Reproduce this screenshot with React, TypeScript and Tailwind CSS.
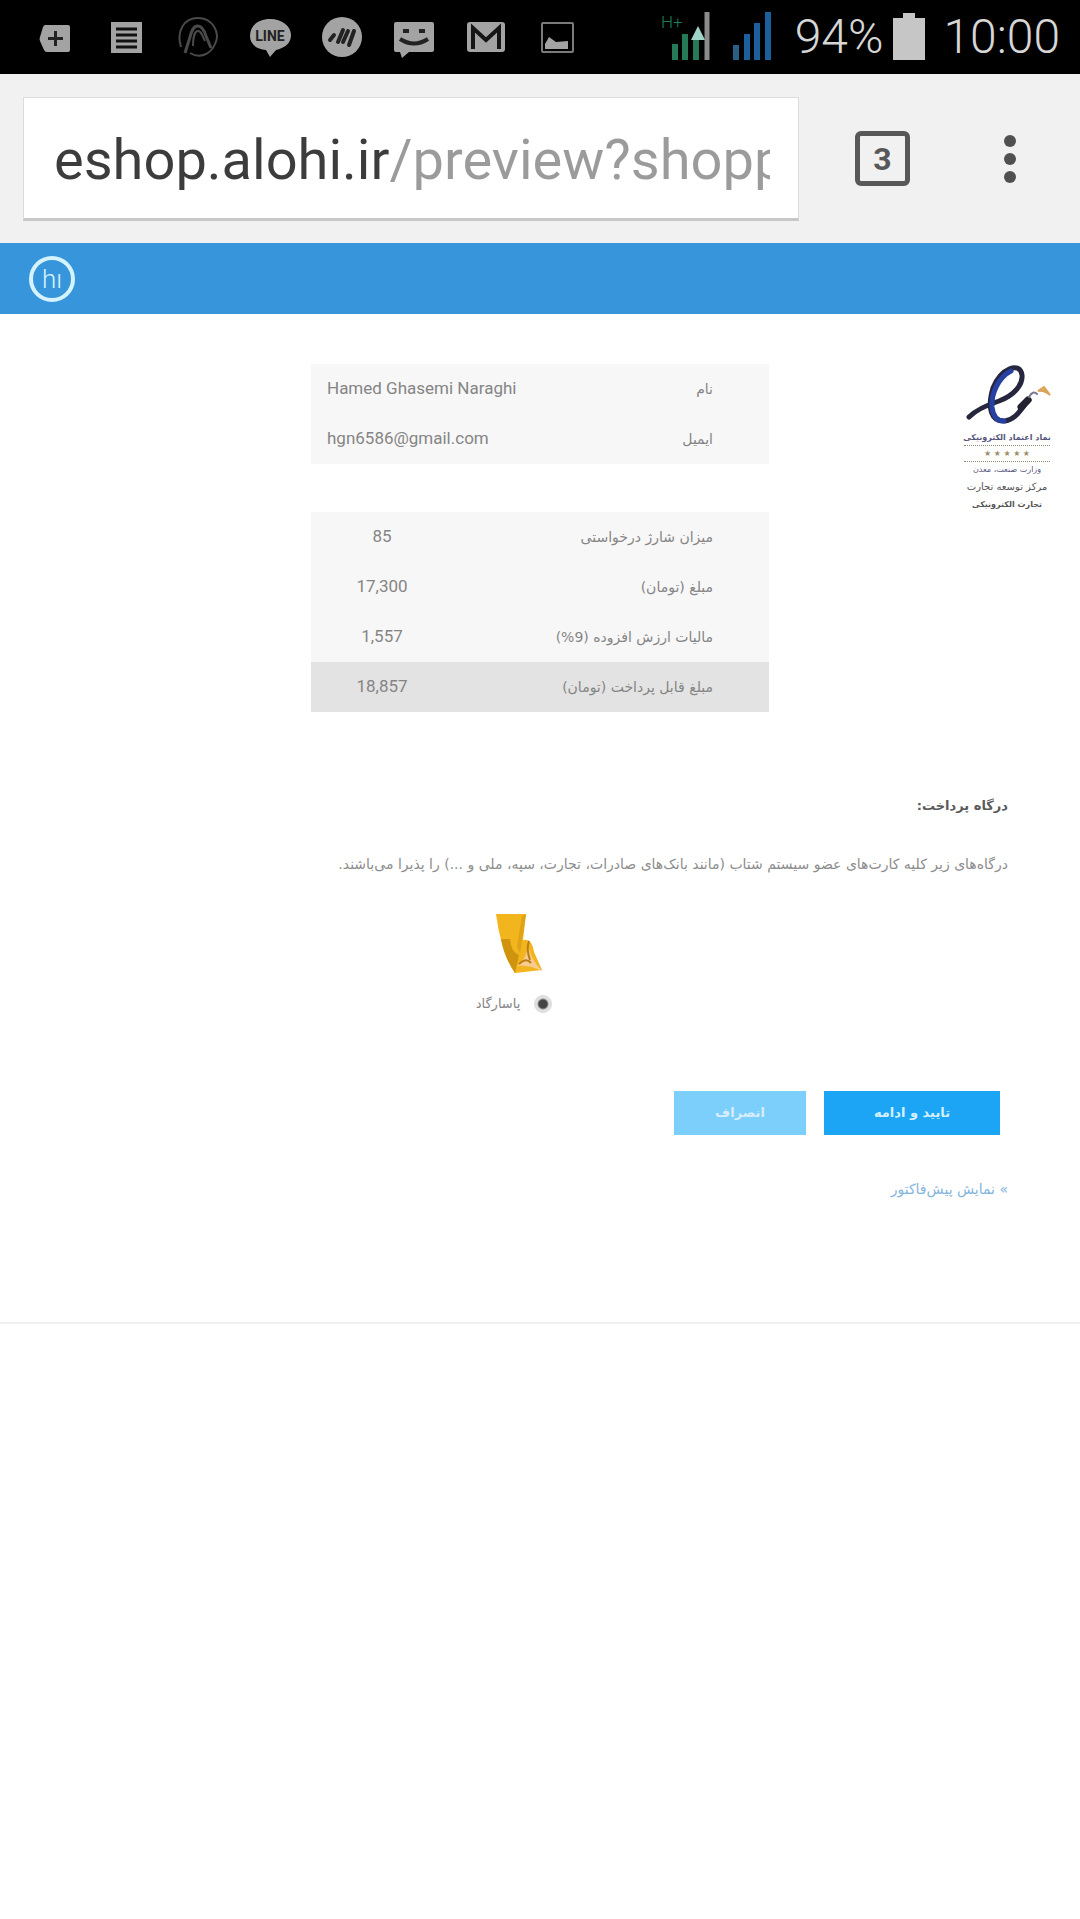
import type { ReactNode } from "react";

type Row = {
  label: string;
  value: string;
  isTotal?: boolean;
};

const account: Row[] = [
  { label: "نام", value: "Hamed Ghasemi Naraghi" },
  { label: "ایمیل", value: "hgn6586@gmail.com" },
];

const invoice: Row[] = [
  { label: "میزان شارژ درخواستی", value: "85" },
  { label: "مبلغ (تومان)", value: "17,300" },
  { label: "مالیات ارزش افزوده (9%)", value: "1,557" },
  { label: "مبلغ قابل پرداخت (تومان)", value: "18,857", isTotal: true },
];

function StatusIcon({ children }: { children: ReactNode }) {
  return (
    <svg viewBox="0 0 44 44" className="size-11 shrink-0" fill="#a3a3a3" aria-hidden="true">
      {children}
    </svg>
  );
}

function StatusBar() {
  return (
    <header className="flex h-[74px] items-center justify-between bg-black pr-5 pl-8">
      <div className="flex items-center gap-7">
        <StatusIcon>
          <path d="M13 10h23q2 0 2 2v23q0 2-2 2H15q-2 0-3-2l-4-9q-1-2 0-4l3-10q1-2 2-2z" />
          <path d="M22 16h3v6h6v3h-6v6h-3v-6h-6v-3h6z" fill="#222" />
        </StatusIcon>
        <StatusIcon>
          <path d="M7 7h31v31H7z" />
          <path d="M12 14h21M12 20h21M12 26h21M12 32h21" stroke="#111" strokeWidth="3" />
        </StatusIcon>
        <StatusIcon>
          <g fill="none" stroke="#4a4a4a" strokeWidth="2">
            <path d="M5 32C0 16 8 3 22 3s23 14 17 26c-4 10-15 15-25 9" />
            <path d="M9 38l5-16c2-8 4-11 8-11s6 4 8 10l5 12" strokeWidth="3" />
            <path d="M17 31c0-9 2-15 5-15s4 4 7 10" />
          </g>
        </StatusIcon>
        <StatusIcon>
          <path d="M22 4c12 0 21 7 21 16s-7 13-15 15l-6 7-4-7C8 34 2 29 2 21 2 11 10 4 22 4z" />
          <text x="22" y="26" textAnchor="middle" fontFamily="Roboto, sans-serif" fontSize="14" fontWeight="700" fill="#222">
            LINE
          </text>
        </StatusIcon>
        <StatusIcon>
          <circle cx="22" cy="22" r="20" />
          <path d="M10 25l4-5M18 27l5-12M23 27l5-11M29 30l5-14" stroke="#222" strokeWidth="4" strokeLinecap="round" />
        </StatusIcon>
        <StatusIcon>
          <path d="M4 7h36q2 0 2 2v26q0 2-2 2H17l-7 6-2-6H4q-2 0-2-2V9q0-2 2-2z" />
          <path d="M11 16h6M27 16h6" stroke="#222" strokeWidth="4" />
          <path d="M8 24q14 9 28 0" fill="none" stroke="#222" strokeWidth="4" />
        </StatusIcon>
        <StatusIcon>
          <rect x="3" y="7" width="38" height="30" rx="3" />
          <path d="M9 34V13l13 12 13-12v21" fill="none" stroke="#151515" strokeWidth="4" />
        </StatusIcon>
        <StatusIcon>
          <rect x="6" y="8" width="31" height="29" rx="1" fill="#000" stroke="#7a7a7a" strokeWidth="2" />
          <path d="M9 34v-5l4-7 7 5 12-1v8z" />
        </StatusIcon>
      </div>
      <div className="flex items-center font-[Roboto,sans-serif] text-[48px] leading-[54px] font-light text-[#d6d6d6]">
        <svg viewBox="0 0 114 54" className="mr-5 h-[54px] w-[114px]" aria-hidden="true">
          <text x="0" y="18" fontFamily="Roboto, sans-serif" fontSize="17" fill="#1d7f5c">
            H+
          </text>
          <path d="M14 50V34M24 50V24M35 50V30" stroke="#257a57" strokeWidth="6" />
          <path d="M46 50V2" stroke="#8b8b8b" strokeWidth="5" />
          <path d="M37 16l7 14H30z" fill="#9fd4c9" />
          <path d="M75 50V35" stroke="#2b5e85" strokeWidth="6" />
          <path d="M86 50V24M96 50V13M107 50V2" stroke="#1b5f9c" strokeWidth="6" />
        </svg>
        <span>94%</span>
        <svg viewBox="0 0 32 48" className="mx-[10px] h-12 w-8" fill="#c6c6c6" aria-hidden="true">
          <path d="M10 0h12v5h10v42H0V5h10z" />
        </svg>
        <span className="ml-2">10:00</span>
      </div>
    </header>
  );
}

function BrowserBar() {
  return (
    <div className="flex h-[169px] items-center bg-[#f1f1f1] pl-[23px] font-[Roboto,sans-serif]">
      <div className="h-[124px] flex-1 border border-b-3 border-[#dcdcdc] border-b-[#c8c8c8] bg-white pr-7 pl-[30px]">
        <input
          type="text"
          aria-label="Address"
          defaultValue="eshop.alohi.ir/preview?shoppingcart"
          className="h-full w-full bg-[linear-gradient(90deg,#3c3c3c_335px,#9b9b9b_335px)] bg-clip-text pt-1 text-[56px] text-transparent outline-none"
        />
      </div>
      <button
        type="button"
        aria-label="Open tabs"
        className="ml-14 flex size-[55px] items-center justify-center rounded-md border-5 border-[#585858] text-[32px] font-bold text-[#585858]"
      >
        3
      </button>
      <button type="button" aria-label="Menu" className="mr-12 ml-[78px] flex w-11 flex-col items-center gap-[6px]">
        <span className="size-3 rounded-full bg-[#505050]" />
        <span className="size-3 rounded-full bg-[#505050]" />
        <span className="size-3 rounded-full bg-[#505050]" />
      </button>
    </div>
  );
}

function DetailTable({ rows, centered }: { rows: Row[]; centered?: boolean }) {
  return (
    <table className="w-full bg-[#f7f7f7] text-[#858585]">
      <tbody>
        {rows.map((row) => (
          <tr key={row.label} className={row.isTotal ? "h-[50px] bg-[#e3e3e3]" : "h-[50px]"}>
            <th scope="row" className="pr-14 text-right text-sm font-normal">
              {row.label}
            </th>
            <td
              dir="ltr"
              className={
                centered
                  ? "w-[142px] text-center font-[Roboto,sans-serif] text-[17px]"
                  : "pl-4 text-left font-[Roboto,sans-serif] text-[17px]"
              }
            >
              {row.value}
            </td>
          </tr>
        ))}
      </tbody>
    </table>
  );
}

function TrustSeal() {
  return (
    <div className="flex w-[86px] flex-col items-center text-center text-[8px] leading-[15px] text-[#55557c]">
      <svg viewBox="0 0 88 66" className="h-[66px] w-[88px]" fill="none" strokeLinecap="round" aria-hidden="true">
        <path d="M6 53C14 45 24 41 36 37c16-6 24-17 23-26C57-3 38 4 30 24c-6 20-2 34 12 33 12-2 16-13 24-21" stroke="#26273f" strokeWidth="5" />
        <path d="M48 7C36 13 28 29 29 43c1 9 5 14 12 14" stroke="#2740a4" strokeWidth="5" />
        <path d="M58 43l7-7" stroke="#23232e" strokeWidth="7" />
        <path d="M66 33q4-7 8-3" stroke="#777790" strokeWidth="2" />
        <path d="M75 27l6-4 6 8q-6-5-12-4z" fill="#e5ae55" stroke="#d9a45a" strokeWidth="2" />
      </svg>
      <strong className="whitespace-nowrap">نماد اعتماد الکترونیکی</strong>
      <span className="w-full border-y border-dotted border-[#8d8d78] text-[#9a8f68]">★ ★ ★ ★ ★</span>
      <span className="whitespace-nowrap">وزارت صنعت، معدن</span>
      <span className="text-[10px] leading-[20px] whitespace-nowrap text-[#555]">مرکز توسعه تجارت</span>
      <strong className="whitespace-nowrap text-[#555]">تجارت الکترونیکی</strong>
    </div>
  );
}

function GatewayPicker() {
  return (
    <div className="pt-9 pr-[52px]">
      <label className="mx-auto flex w-32 flex-col items-center text-[13px] leading-5 text-[#858585]">
        <svg viewBox="0 0 48 62" className="ml-2 h-[62px] w-12" aria-hidden="true">
          <path d="M2 2h30l-3 26q9-2 11 12l8 18-27 3Q7 40 2 2z" fill="#f2b51d" />
          <path d="M7 27q3 18 14 34l4-18q-8-3-9-16z" fill="#cf930e" />
          <path d="M28 4l-5 30 3 8 6-40z" fill="#dea319" />
          <path d="M23 54q9-5 11-21 3 15 14 26-12-6-25-5z" fill="#f8cb8e" />
          <path d="M35 29q-3 8 1 19M25 52q7-7 12-1" fill="none" stroke="#b97c16" strokeWidth="2" />
        </svg>
        <span className="mt-5 flex items-center gap-[14px]">
          <input
            type="radio"
            name="gateway"
            defaultChecked
            className="size-[18px] appearance-none rounded-full border border-[#dcdcdc] bg-[#eee] checked:bg-[radial-gradient(circle,#444_0_4px,#e0e0e0_6px)]"
          />
          پاسارگاد
        </span>
      </label>
    </div>
  );
}

export default function App() {
  return (
    <div className="flex min-h-screen flex-col bg-white">
      <StatusBar />
      <BrowserBar />
      <div className="flex h-[71px] items-center bg-[#3796db] pl-7">
        <svg viewBox="0 0 48 48" className="size-12" aria-label="hi" role="img">
          <circle cx="24" cy="24" r="21" fill="none" stroke="#d5f3ff" strokeWidth="4" />
          <text x="24" y="33" textAnchor="middle" fontFamily="Roboto, sans-serif" fontSize="26" fontWeight="300" fill="#d5f3ff">
            hı
          </text>
        </svg>
      </div>

      <main dir="rtl" className="border-b-2 border-[#f0f0f0] pt-[50px] pb-[121px] font-['DejaVu_Sans',sans-serif]">
        <div className="grid grid-cols-[1fr_458px_1fr] items-start">
          <div className="pr-[30px]">
            <TrustSeal />
          </div>
          <div className="flex flex-col gap-12">
            <DetailTable rows={account} />
            <DetailTable rows={invoice} centered />
          </div>
        </div>

        <section className="px-18 pt-[82px]">
          <h2 className="text-[13px] leading-6 font-bold text-[#5a5a5a]">درگاه پرداخت:</h2>
          <p className="mt-[34px] text-sm leading-6 whitespace-nowrap text-[#8d8d8d]">
            درگاه‌های زیر کلیه کارت‌های عضو سیستم شتاب (مانند بانک‌های صادرات، تجارت، سپه، ملی و ...) را پذیرا می‌باشند.
          </p>
        </section>

        <GatewayPicker />

        <div className="mt-[77px] flex gap-[18px] pr-20 text-[13px] font-bold">
          <button type="button" className="h-11 w-44 bg-[#1da5f5] text-[#d3f0ff]">
            تایید و ادامه
          </button>
          <button type="button" className="h-11 w-33 bg-[#7dcffb] text-[#d8edff]">
            انصراف
          </button>
        </div>
        <a href="#invoice" className="mt-[42px] mr-18 inline-block text-sm leading-6 text-[#83b4dc]">
          » نمایش پیش‌فاکتور
        </a>
      </main>
    </div>
  );
}
